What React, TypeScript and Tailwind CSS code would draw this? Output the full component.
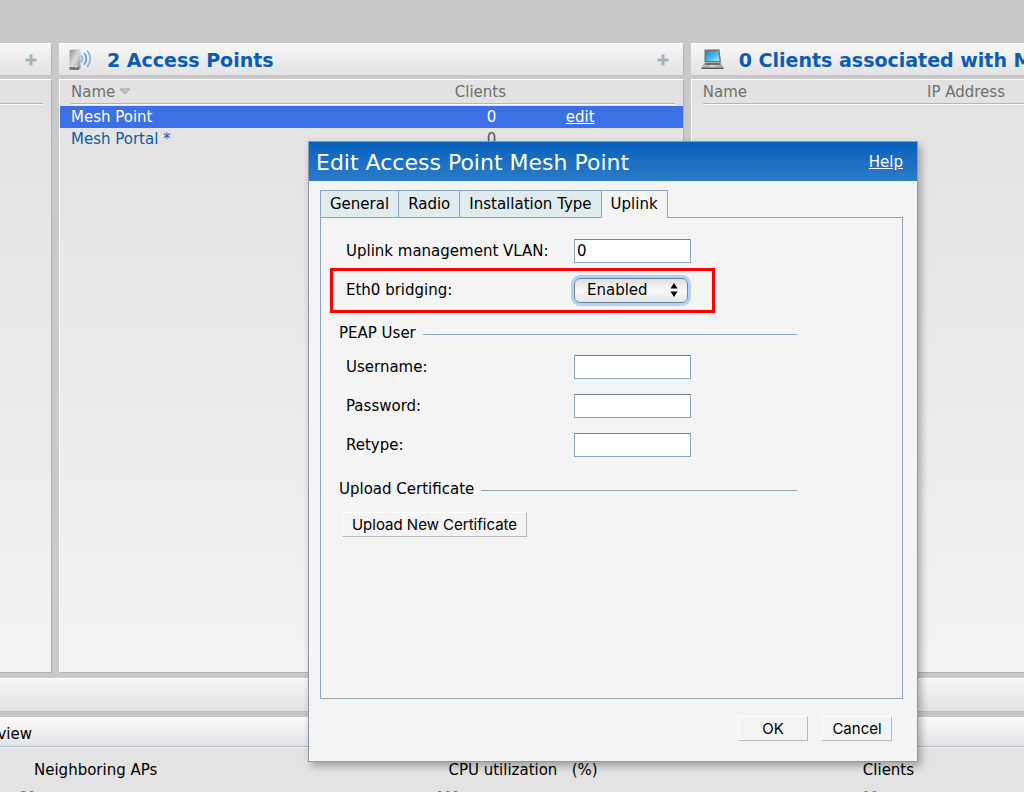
import { ReactNode } from "react";

const accessPoints = [
  { name: "Mesh Point", clients: 0, selected: true },
  { name: "Mesh Portal *", clients: 0, selected: false },
];

const tabs = ["General", "Radio", "Installation Type", "Uplink"];

const peapFields = [
  { id: "username", label: "Username:", type: "text" },
  { id: "password", label: "Password:", type: "password" },
  { id: "retype", label: "Retype:", type: "password" },
];

const charts = [
  { title: "Neighboring APs", max: "20", axis: "-ml-3.5" },
  { title: "CPU utilization   (%)", max: "100", axis: "-ml-3" },
  { title: "Clients", max: "10", axis: "" },
];

const inputClass =
  "h-6 w-[117px] border border-[#8ba3bb] border-t-[#6f8396] bg-white px-[2px] text-[15px] text-black outline-none";

const buttonClass =
  "h-[25px] border border-t-white border-l-white border-r-[#b9b9b9] border-b-[#b9b9b9] bg-[#f4f4f4] pb-px font-['Inter',sans-serif] text-[15px] leading-none text-black";

function AccessPointIcon() {
  return (
    <svg className="shrink-0" width="24" height="22" viewBox="0 0 24 22" aria-hidden="true">
      <defs>
        <linearGradient id="apBody" x1="0" y1="0" x2="1" y2="1">
          <stop offset="0" stopColor="#8f8f8f" />
          <stop offset="0.5" stopColor="#dcdcdc" />
          <stop offset="1" stopColor="#8a8a8a" />
        </linearGradient>
      </defs>
      <path d="M.5 1.5L2.500 .5H11.500V19.500L9.500 21H.5z" fill="url(#apBody)" />
      <path d="M.5 18H10V21H.5z" fill="#777" />
      <circle cx="7" cy="17.500" r="1" fill="#e9f2e4" />
      <g fill="none" strokeLinecap="round" strokeWidth="1.800">
        <path d="M12.500 7Q14.500 9.500 12.500 12.500" stroke="#8db6dd" />
        <path d="M15.500 4.500Q19 9.500 15.500 15" stroke="#6fa3d6" />
        <path d="M18.500 2Q24 9.500 18.500 17.500" stroke="#8db6dd" />
      </g>
    </svg>
  );
}

function LaptopIcon() {
  return (
    <svg className="shrink-0" width="24" height="22" viewBox="0 0 24 22" aria-hidden="true">
      <defs>
        <linearGradient id="lcd" x1="0" y1="0" x2="1" y2="1">
          <stop offset="0" stopColor="#1f86cf" />
          <stop offset="0.6" stopColor="#4fc0f2" />
          <stop offset="1" stopColor="#b9ecff" />
        </linearGradient>
      </defs>
      <path d="M3.500 .5H18.500L20 13.500H3.500z" fill="#70706c" />
      <path d="M5 2H17.500L18.500 12H5z" fill="url(#lcd)" />
      <path d="M3.500 13.500H20L22.500 18.500H.5z" fill="#b3b3b3" />
      <path d="M4.500 14H18.500L19.500 16H3.500z" fill="#6d6d6d" />
      <path d="M9 16.500H14L14.500 18H8.500z" fill="#d9d9d9" />
      <path d="M.5 18.500H22.500V20H.5z" fill="#555" />
    </svg>
  );
}

function PlusIcon() {
  return (
    <svg width="12" height="12" viewBox="0 0 12 12" aria-hidden="true">
      <path d="M6 .5V11.500M.5 6H11.500" stroke="#a3b5ba" strokeWidth="3" />
    </svg>
  );
}

function ColumnHeader({ children }: { children?: ReactNode }) {
  return (
    <div className="flex h-[33px] items-center border-r border-b border-t border-t-white border-r-[#b4b4b4] border-b-[#c0c0c0] bg-linear-to-b from-[#f8f8f8] to-[#e2e2e2]">
      {children}
    </div>
  );
}

function ColumnBody({ children }: { children?: ReactNode }) {
  return (
    <div className="h-[594px] border border-t-white border-r-[#b0b0b0] border-b-[#b0b0b0] border-l-white bg-linear-to-b from-[#e2e2e2] to-[#f3f3f3]">
      {children}
    </div>
  );
}

function HeaderCell({ children, className = "" }: { children?: ReactNode; className?: string }) {
  return (
    <th className={`p-0 text-left font-normal text-[#6f6f6f] ${className}`}>
      <div className="flex h-6 items-center gap-1 border-b border-[#aab6ca] whitespace-nowrap shadow-[0_1px_0_#f6f6f6]">
        {children}
      </div>
    </th>
  );
}

function Section({ title }: { title: string }) {
  return (
    <div className="flex h-[30px] items-center gap-[7px] pr-[105px]">
      <h2>{title}</h2>
      <div className="mt-[2px] h-px flex-1 bg-[#8ba3bb]" />
    </div>
  );
}

function EditDialog() {
  return (
    <div
      role="dialog"
      aria-label="Edit Access Point Mesh Point"
      className="absolute top-[141px] left-[308px] w-[610px] border border-[#8c98a8] bg-[#f4f4f4] text-black shadow-[3px_4px_8px_rgba(0,0,0,0.3)]"
    >
      <div className="flex h-[39px] items-center justify-between bg-linear-to-b from-[#0560bc] to-[#2b7cc8] pr-[14px] pl-[7px] text-white">
        <h1 className="pt-[2px] text-[22px] leading-7">Edit Access Point Mesh Point</h1>
        <a href="#help" className="underline">
          Help
        </a>
      </div>

      <div className="pt-[9px] pr-[14px] pl-[11px]">
        <div role="tablist" className="flex">
          {tabs.map((tab) => (
            <button
              key={tab}
              role="tab"
              aria-selected={tab === "Uplink"}
              className={
                tab === "Uplink"
                  ? "relative -mb-px h-7 border border-b-0 border-[#8ba3bb] bg-[#f4f4f4] px-[9px] pb-px"
                  : "h-[27px] border-t border-l border-[#8ba3bb] bg-[#e0ebee] px-[9px]"
              }
            >
              {tab}
            </button>
          ))}
        </div>

        <div role="tabpanel" className="h-[482px] border border-[#8ba3bb] pt-4 pl-[9px]">
          <div className="flex h-[34px] items-center pl-4">
            <label htmlFor="vlan" className="w-[228px]">
              Uplink management VLAN:
            </label>
            <input id="vlan" defaultValue="0" className={inputClass} />
          </div>

          <div className="flex h-[45px] w-[385px] items-center border-[3px] border-[#fe0000] pb-px pl-[13px]">
            <label htmlFor="bridging" className="w-[228px]">
              Eth0 bridging:
            </label>
            <div className="relative">
              <select
                id="bridging"
                defaultValue="Enabled"
                className="h-[25px] w-[114px] appearance-none rounded-md border border-[#71839a] bg-linear-to-b from-[#dedede] via-[#f8f8f8] to-[#e6e6e6] pl-3 text-[15px] text-black shadow-[0_0_0_3px_#b0d2f8] outline-none"
              >
                <option>Enabled</option>
                <option>Disabled</option>
              </select>
              <svg
                width="8"
                height="14"
                viewBox="0 0 8 14"
                className="pointer-events-none absolute top-[5px] right-[10px]"
                aria-hidden="true"
              >
                <path d="M4 0L7.500 5.500H.5zM4 14L.5 8.500H7.500z" fill="#000" />
              </svg>
            </div>
          </div>

          <div className="mt-[5px] pl-[9px]">
            <Section title="PEAP User" />
          </div>
          {peapFields.map((field) => (
            <div key={field.id} className="flex h-[39px] items-center pb-px pl-4">
              <label htmlFor={field.id} className="w-[228px]">
                {field.label}
              </label>
              <input id={field.id} type={field.type} className={inputClass} />
            </div>
          ))}

          <div className="mt-[9px] pl-[9px]">
            <Section title="Upload Certificate" />
          </div>
          <button className={`${buttonClass} mt-2 ml-3 w-[185px]`}>Upload New Certificate</button>
        </div>
      </div>

      <div className="flex justify-end gap-[14px] pt-[17px] pr-[25px] pb-5">
        <button className={`${buttonClass} w-[70px]`}>OK</button>
        <button className={`${buttonClass} w-[70px]`}>Cancel</button>
      </div>
    </div>
  );
}

export default function App() {
  return (
    <div className="relative h-screen overflow-hidden bg-[#c9c9c9] pt-[43px] font-['DejaVu_Sans',Verdana,sans-serif] text-[15px] leading-5">
      <main className="grid grid-cols-[52px_15fr_8fr] gap-[7px]">
        <section className="-ml-px flex min-w-0 flex-col gap-[3px]">
          <ColumnHeader>
            <button aria-label="Add network" className="ml-auto pr-[14px]">
              <PlusIcon />
            </button>
          </ColumnHeader>
          <ColumnBody>
            <div className="mr-2 h-6 border-b border-[#aab6ca] shadow-[0_1px_0_#f6f6f6]" />
          </ColumnBody>
        </section>

        <section className="flex min-w-0 flex-col gap-[3px]">
          <ColumnHeader>
            <div className="flex items-center gap-[14px] pl-[10px] whitespace-nowrap">
              <AccessPointIcon />
              <h2 className="text-[19px] font-bold text-[#0b5cb5]">2 Access Points</h2>
            </div>
            <button aria-label="Add access point" className="ml-auto pr-[14px]">
              <PlusIcon />
            </button>
          </ColumnHeader>
          <ColumnBody>
            <table className="w-full table-fixed border-collapse">
              <thead>
                <tr className="h-[26px] align-top">
                  <HeaderCell className="pl-[11px]">
                    Name
                    <svg width="12" height="7" viewBox="0 0 12 7" aria-hidden="true">
                      <path d="M1 1H11L6 6z" fill="#c4c8c8" stroke="#a0a5a5" />
                    </svg>
                  </HeaderCell>
                  <HeaderCell className="w-[111px]">Clients</HeaderCell>
                  <HeaderCell className="w-[117px] pr-2" />
                </tr>
              </thead>
              <tbody>
                {accessPoints.map((ap) => (
                  <tr
                    key={ap.name}
                    className={
                      ap.selected ? "h-[22px] bg-[#3d6fe6] text-white" : "h-[22px] text-[#0b5ca8]"
                    }
                  >
                    <td className="p-0 pl-[11px]">{ap.name}</td>
                    <td className={ap.selected ? "p-0 pl-8" : "p-0 pl-8 text-[#555]"}>{ap.clients}</td>
                    <td className="p-0">
                      {ap.selected && (
                        <a href="#edit" className="underline">
                          edit
                        </a>
                      )}
                    </td>
                  </tr>
                ))}
              </tbody>
            </table>
          </ColumnBody>
        </section>

        <section className="-mr-px flex min-w-0 flex-col gap-[3px]">
          <ColumnHeader>
            <div className="flex items-center gap-[14px] overflow-hidden pl-[10px] whitespace-nowrap">
              <LaptopIcon />
              <h2 className="text-[19px] font-bold text-[#0b5cb5]">
                0 Clients associated with Mesh Point
              </h2>
            </div>
          </ColumnHeader>
          <ColumnBody>
            <table className="w-full table-fixed border-collapse">
              <thead>
                <tr className="h-[26px] align-top">
                  <HeaderCell className="pl-[11px]">Name</HeaderCell>
                  <HeaderCell className="w-[97px]">IP Address</HeaderCell>
                </tr>
              </thead>
            </table>
          </ColumnBody>
        </section>
      </main>

      <div className="mt-[5px] h-[34px] border-t border-b border-t-white border-b-[#bdbdbd] bg-linear-to-b from-[#f6f6f6] to-[#e2e2e2]" />

      <section className="mt-[5px]">
        <div className="flex h-[30px] items-center border-t border-b border-t-white border-b-[#aab6ca] bg-linear-to-b from-[#fafafa] to-[#e4e4e4] pt-1">
          <h2 className="flex w-8 justify-end overflow-hidden text-black">Overview</h2>
        </div>
        <div className="grid h-24 grid-cols-[36fr_36fr_14fr] border-t border-[#f6f6f6] bg-[#e3e3e3] pt-[12px] pl-[34px] text-black">
          {charts.map((chart) => (
            <div key={chart.title}>
              <h3 className="whitespace-pre">{chart.title}</h3>
              <p className={`mt-2 text-xs text-[#777] ${chart.axis}`}>{chart.max}</p>
            </div>
          ))}
        </div>
      </section>

      <EditDialog />
    </div>
  );
}
